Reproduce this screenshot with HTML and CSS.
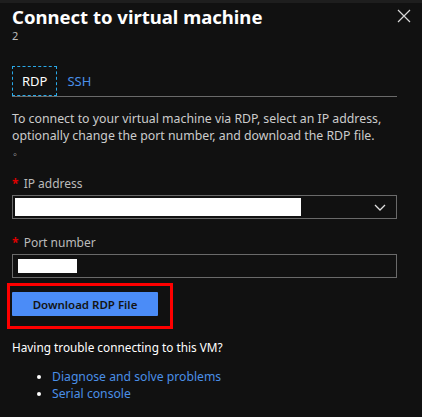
FILE: index.html
```html
<!DOCTYPE html>
<html lang="en">
<head>
<meta charset="utf-8">
<title>Connect to virtual machine</title>
<link rel="stylesheet" href="styles.css">
</head>
<body>
<div class="topstrip"></div>
<div class="panel">
  <header class="head">
    <div class="titles">
      <h1 class="title">Connect to virtual machine</h1>
      <div class="subtitle">2</div>
    </div>
    <button class="close" aria-label="Close">
      <svg width="14" height="14" viewBox="0 0 14 14"><path d="M1 1 L13 13 M13 1 L1 13" stroke="#d8d8d8" stroke-width="1.2" fill="none"/></svg>
    </button>
  </header>
  <nav class="tabs">
    <span class="tab active">RDP</span>
    <span class="tab">SSH</span>
  </nav>
  <p class="desc">To connect to your virtual machine via RDP, select an IP address, optionally change the port number, and download the RDP file.</p>
  <div class="dot">◦</div>
  <div class="field">
    <label class="label"><span class="req">*</span> IP address</label>
    <div class="box select">
      <span class="redact wide"></span>
      <svg class="chev" width="12" height="7" viewBox="0 0 12 7"><path d="M1 1 L6 6 L11 1" stroke="#e0e0e0" stroke-width="1.3" fill="none"/></svg>
    </div>
  </div>
  <div class="field">
    <label class="label"><span class="req">*</span> Port number</label>
    <div class="box input">
      <span class="redact short"></span>
    </div>
  </div>
  <div class="highlight">
    <button class="primary">Download RDP File</button>
  </div>
  <p class="trouble">Having trouble connecting to this VM?</p>
  <ul class="links">
    <li><a href="#">Diagnose and solve problems</a></li>
    <li><a href="#">Serial console</a></li>
  </ul>
</div>
</body>
</html>
```
FILE: styles.css
```css
html, body {
  margin: 0;
  padding: 0;
  background: #111111;
  font-family: "Segoe UI", "Noto Sans", "Open Sans", sans-serif;
  color: #d0d0d0;
}
.topstrip {
  height: 3px;
  background: #1e1e1e;
}
.panel {
  padding: 0 25px 0 12px;
}
.head {
  display: flex;
  justify-content: space-between;
  align-items: flex-start;
}
.title {
  margin: 2px 0 0 0;
  font-size: 18.5px;
  font-weight: 700;
  color: #ffffff;
  line-height: 24px;
}
.subtitle {
  font-size: 11px;
  line-height: 13px;
  color: #bdbdbd;
}
.close {
  background: none;
  border: none;
  padding: 0;
  margin: 6px -14px 0 0;
  width: 14px;
  height: 14px;
  display: flex;
}
.tabs {
  display: flex;
  align-items: stretch;
  margin-top: 24px;
  border-bottom: 1px solid #6a6a6a;
  height: 30px;
}
.tab {
  font-size: 13px;
  display: flex;
  align-items: center;
  padding: 0 6px;
  color: #4a8fe7;
}
.tab.active {
  color: #ffffff;
  border: 1px dashed #29a9e8;
  padding: 0 9px;
  margin-right: 4px;
}
.desc {
  margin: 13px 0 0 0;
  font-size: 12.3px;
  line-height: 17px;
  color: #cccccc;
}
.dot {
  font-size: 11px;
  line-height: 12px;
  color: #b0b0b0;
  margin-top: 4px;
  padding-left: 1px;
}
.field {
  margin-top: 16px;
}
.field + .field {
  margin-top: 16px;
}
.label {
  display: block;
  font-size: 12px;
  line-height: 16px;
  color: #bbbbbb;
  margin-bottom: 3px;
}
.req {
  color: #e00000;
  font-weight: 700;
  margin-right: 2px;
}
.box {
  border: 1px solid #6a6a6a;
  height: 22px;
  display: flex;
  align-items: center;
  box-sizing: content-box;
}
.select {
  padding: 0 10px 0 2px;
  justify-content: space-between;
}
.input {
  padding: 0 5px;
}
.redact {
  display: block;
  background: #ffffff;
}
.redact.wide {
  width: 286px;
  height: 18px;
}
.redact.short {
  width: 59px;
  height: 14px;
}
.highlight {
  margin: 5px 0 0 -5px;
  border: 3px solid #ff0000;
  width: 158px;
  padding: 6px 0 10px 2px;
  box-sizing: content-box;
}
.primary {
  display: block;
  width: 146px;
  height: 24px;
  border: none;
  border-radius: 1px;
  background: #4b8cf7;
  color: #141414;
  font-family: inherit;
  font-size: 11.5px;
  font-weight: 600;
  padding: 0;
}
.trouble {
  margin: 10px 0 0 0;
  font-size: 11.8px;
  line-height: 17px;
  color: #ffffff;
}
.links {
  margin: 12px 0 0 0;
  padding-left: 40px;
  font-size: 12.2px;
  line-height: 17px;
  color: #ffffff;
}
.links a {
  color: #4a8fe7;
  text-decoration: none;
}
```
